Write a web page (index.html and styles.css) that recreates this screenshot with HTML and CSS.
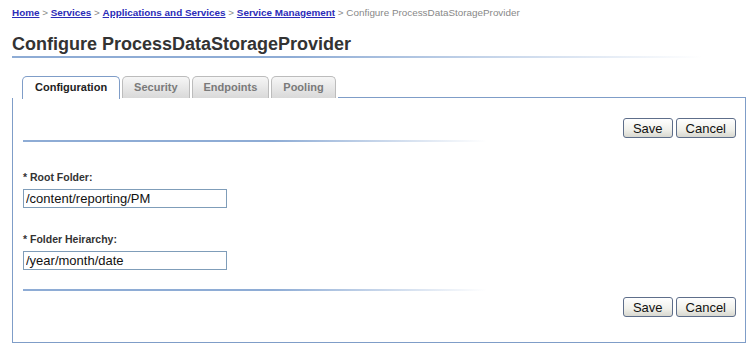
FILE: index.html
```html
<!DOCTYPE html>
<html lang="en">
<head>
  <meta charset="UTF-8">
  <title>Configure ProcessDataStorageProvider</title>
  <link rel="stylesheet" href="styles.css">
</head>
<body>
  <div class="breadcrumb">
    <a href="#">Home</a> &gt; <a href="#">Services</a> &gt; <a href="#">Applications and Services</a> &gt; <a href="#">Service Management</a> &gt; <span class="current">Configure ProcessDataStorageProvider</span>
  </div>

  <h1>Configure ProcessDataStorageProvider</h1>
  <div class="title-rule"></div>

  <div class="tabs">
    <div class="tab active">Configuration</div>
    <div class="tab">Security</div>
    <div class="tab">Endpoints</div>
    <div class="tab">Pooling</div>
    <div class="tab-fill"></div>
  </div>

  <div class="panel">
    <div class="actions">
      <button class="btn">Save</button>
      <button class="btn">Cancel</button>
    </div>
    <div class="rule"></div>

    <div class="form-group">
      <label for="root">* Root Folder:</label>
      <input type="text" id="root" value="/content/reporting/PM">
    </div>
    <div class="form-group">
      <label for="hier">* Folder Heirarchy:</label>
      <input type="text" id="hier" value="/year/month/date">
    </div>

    <div class="rule bottom"></div>
    <div class="actions">
      <button class="btn">Save</button>
      <button class="btn">Cancel</button>
    </div>
  </div>
</body>
</html>
```

FILE: styles.css
```css
:root {
  --link: #2b2bb8;
  --panel-border: #7f9dc8;
  --rule: #8eacd5;
  --text: #333;
  --font-family: 'Liberation Sans', Arial, sans-serif;
}

body {
  font-family: var(--font-family);
  background: #fff;
  margin: 0;
  padding: 7px 4px 0 12px;
  color: var(--text);
}

.breadcrumb {
  font-size: 9.9px;
  line-height: 12px;
  color: #888;
}

.breadcrumb a {
  color: var(--link);
  font-weight: 700;
  text-decoration: underline;
}

.breadcrumb .current {
  color: #888;
}

h1 {
  font-size: 18px;
  font-weight: 700;
  margin: 14px 0 0;
  line-height: 22px;
  color: var(--text);
}

.title-rule {
  height: 2px;
  margin-top: 1px;
  width: 690px;
  background: linear-gradient(to right, var(--rule) 0, var(--rule) 40%, #fff 100%);
}

.tabs {
  display: flex;
  align-items: flex-end;
  margin-top: 17px;
  padding-left: 10px;
  height: 23px;
}

.tab {
  height: 22px;
  box-sizing: border-box;
  padding: 0 11px;
  margin-right: 2px;
  font-size: 11px;
  font-weight: 700;
  line-height: 21px;
  color: #7a7a7a;
  border: 1px solid #bcbcbc;
  border-bottom: none;
  border-radius: 5px 5px 0 0;
  background: linear-gradient(#f6f6f6, #d9d9d9);
}

.tab.active {
  height: 23px;
  padding: 0 12px;
  color: #222;
  background: #fff;
  border-color: var(--panel-border);
  margin-bottom: -1px;
  position: relative;
}

.tab-fill {
  flex: 1;
  border-bottom: 1px solid var(--panel-border);
}

.panel {
  width: 734px;
  height: 245px;
  border: 1px solid var(--panel-border);
  border-top: none;
  padding: 20px 9px 0 10px;
  box-sizing: border-box;
}

.actions {
  display: flex;
  justify-content: flex-end;
  gap: 3px;
  height: 20px;
}

.btn {
  font-family: var(--font-family);
  font-size: 13px;
  color: #111;
  height: 20px;
  padding: 0 9px;
  border: 1px solid #5e6e8a;
  border-radius: 3px;
  background: linear-gradient(#ffffff, #f0f0ea 60%, #d8d8d0);
}

.rule {
  height: 2px;
  margin-top: 2px;
  background: linear-gradient(to right, var(--rule) 0, var(--rule) 35%, #fff 65%);
}

.rule.bottom {
  margin-top: 19px;
  margin-bottom: 6px;
}

.form-group {
  margin-top: 29px;
}

.form-group + .form-group {
  margin-top: 25px;
}

label {
  display: block;
  font-size: 10.5px;
  font-weight: 700;
  line-height: 13px;
  margin-bottom: 5px;
  color: var(--text);
}

input {
  display: block;
  width: 204px;
  height: 19px;
  box-sizing: border-box;
  padding: 0 2px;
  font-family: var(--font-family);
  font-size: 13px;
  color: #111;
  border: 1px solid #7f9db9;
  outline: none;
}
```
